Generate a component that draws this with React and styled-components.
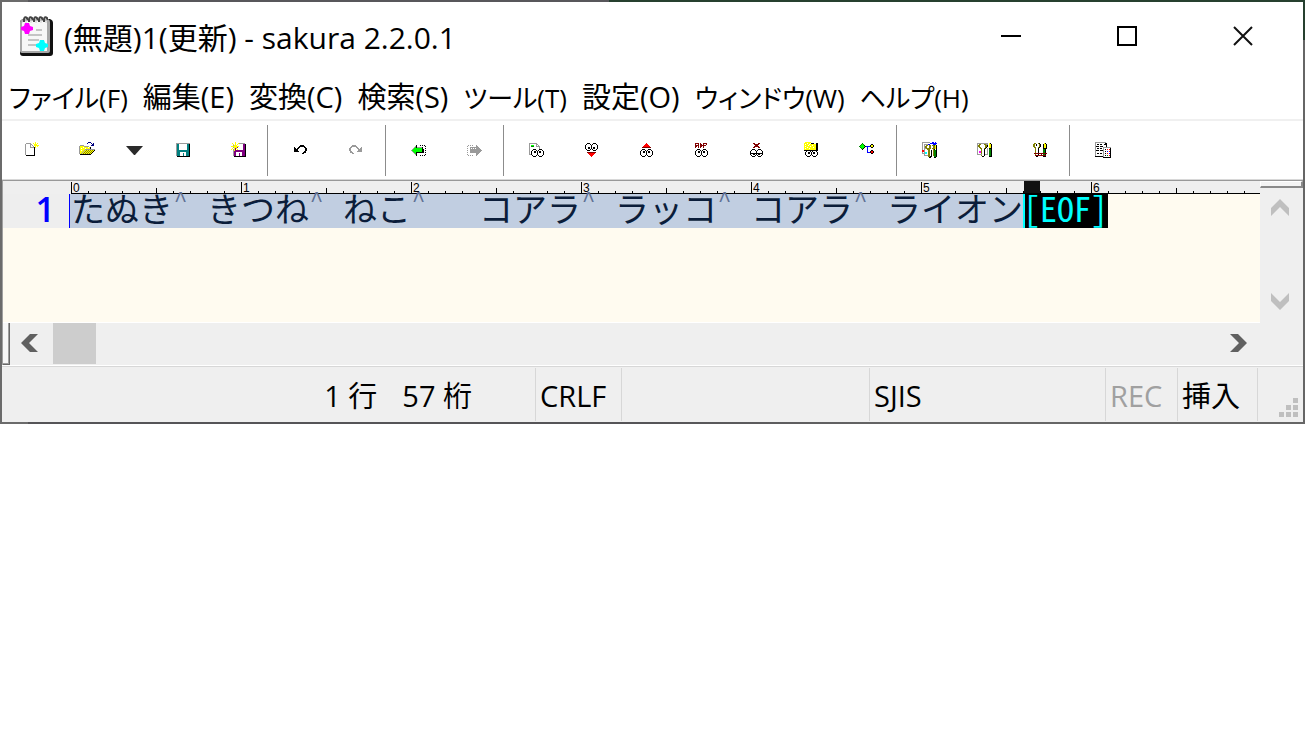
import React from 'react';
import styled, { createGlobalStyle } from 'styled-components';

const GlobalStyle = createGlobalStyle`
  *, *::before, *::after { box-sizing: border-box; }
  body {
    margin: 0;
    background: #ffffff;
    color: #000000;
    font-family: "Open Sans", "Noto Sans CJK JP", sans-serif;
  }
  button { margin: 0; padding: 0; border: 0; background: none; color: inherit; font: inherit; }
`;

const Frame = styled.main`
  padding: 2px;
  background:
    linear-gradient(#26402f, #26402f) right top / 2px 40px no-repeat,
    linear-gradient(to right, #6b6b6b 0 28px, #58575b 28px 609px, #26402f 609px) left top / 100% 2px no-repeat,
    linear-gradient(to right, #6b6b6b 0 28px, #555457 28px 50%, #666666 70%);
`;

const Window = styled.div`
  background: #ffffff;
`;

const TitleBar = styled.header`
  display: flex;
  align-items: center;
  height: 68px;
  padding: 0 2px 0 17px;
`;

const Title = styled.h1`
  flex: 1;
  margin: 0;
  padding: 4px 0 0 10px;
  font-size: 30px;
  line-height: 40px;
  font-weight: 400;
  white-space: nowrap;
`;

const WindowButton = styled.button`
  display: flex;
  align-items: center;
  justify-content: center;
  width: 116px;
  height: 68px;
`;

const MenuBar = styled.nav`
  display: flex;
  align-items: baseline;
  gap: 15px;
  height: 51px;
  padding: 7px 0 0 7px;
  border-bottom: 2px solid #f0f0f0;
`;

const MenuItem = styled.button`
  height: 40px;
  font-size: ${(p) => (p.$kana ? 26 : 29)}px;
  line-height: 40px;
  font-feature-settings: "palt";
  white-space: nowrap;
`;

const ToolBar = styled.div`
  display: flex;
  align-items: center;
  height: 59px;
  padding-left: 2px;
  border-bottom: 1px solid #d8d8d8;
`;

const ToolButton = styled.button`
  display: flex;
  align-items: center;
  justify-content: center;
  width: ${(p) => (p.$narrow ? 41 : 55)}px;
  height: 52px;
`;

const Separator = styled.span`
  width: 1px;
  height: 51px;
  margin: 0 5px 0 2px;
  background: #8c8c8c;
`;

const Editor = styled.section`
  display: grid;
  grid-template-columns: minmax(0, 1fr) 43px;
  border-top: 1px solid #999999;
  border-left: 1px solid #a0a0a0;
  background: #efefef;
`;

const TextPane = styled.div`
  height: 142px;
  overflow: hidden;
  background: #fffbf0;
  border-bottom: 1px solid #ffffff;
`;

const Ruler = styled.div`
  display: flex;
  height: 13px;
  padding-left: 68px;
  background: #efefef;
`;

const RulerScale = styled.svg`
  flex: 1;
  min-width: 0;
  height: 13px;
  font-family: "Liberation Sans", sans-serif;
  font-size: 12px;
`;

const Line = styled.div`
  display: flex;
  height: 34px;
  font-family: "Noto Sans Mono CJK JP", "Noto Sans CJK JP", monospace;
  font-size: 34px;
  line-height: 28px;
  white-space: pre;
`;

const LineNumber = styled.span`
  width: 67px;
  padding-right: 14px;
  border-right: 1px solid #0000ff;
  background: #eeeeee;
  color: #0000ff;
  font-family: "Open Sans", sans-serif;
  font-weight: 600;
  line-height: 30px;
  text-align: right;
`;

const Selection = styled.span`
  display: flex;
  padding-left: 1px;
  background: #c1cee1;
  color: #0b1d3a;
`;

const TabMark = styled.span`
  width: ${(p) => p.$columns * 17}px;
  padding-left: 1px;
  color: #5f7093;
  font-family: "Liberation Mono", monospace;
  font-size: 22px;
  line-height: 16px;
`;

const EofMark = styled.span`
  width: 85px;
  background: #000000;
  color: #00ffff;
  box-shadow: inset 2px 0 0 #00ffff;
`;

const VerticalScroll = styled.div`
  display: flex;
  flex-direction: column;
  padding-bottom: 2px;
`;

const VerticalSplit = styled.div`
  height: 7px;
  background: #f4f4f4;
  border: 1px solid #ffffff;
  border-right: 2px solid #8a8a8a;
  border-bottom: 2px solid #8a8a8a;
`;

const ScrollButton = styled.button`
  display: flex;
  align-items: center;
  justify-content: center;
  width: 40px;
  height: 40px;
`;

const VerticalTrack = styled.div`
  flex: 1;
`;

const HorizontalScroll = styled.div`
  display: flex;
  height: 43px;
  padding: 0 2px 1px 0;
`;

const HorizontalSplit = styled.div`
  width: 7px;
  background: #f8f8f8;
  border-right: 1px solid #696969;
  border-bottom: 1px solid #696969;
  box-shadow: inset -1px -1px 0 #a0a0a0;
`;

const HorizontalTrack = styled.div`
  flex: 1;
  margin-left: 3px;
`;

const Thumb = styled.div`
  width: 43px;
  height: 41px;
  background: #cdcdcd;
`;

const StatusBar = styled.footer`
  display: flex;
  height: 56px;
  padding-top: 1px;
  border-top: 1px solid #d7d7d7;
  background: #efefef;
  box-shadow: 0 -1px 0 #ffffff;
  font-size: 29px;
  line-height: 55px;
`;

const StatusCell = styled.span`
  flex: ${(p) => (p.$width ? `0 0 ${p.$width}px` : '1')};
  height: 53px;
  padding-left: 4px;
  border-right: 1px solid #d7d7d7;
  color: ${(p) => (p.$muted ? '#a0a0a0' : '#000000')};
  white-space: pre;
`;

const Position = styled(StatusCell)`
  display: flex;
  justify-content: flex-end;
  gap: 25px;
  padding-right: 63px;
`;

const Grip = styled.span`
  display: flex;
  width: 45px;
  align-items: flex-end;
  justify-content: flex-end;
  padding: 0 5px 5px 0;
`;

const inks = {
  k: '#000000', g: '#9a9a9a', w: '#ffffff', y: '#ffff00', o: '#808000', n: '#000080',
  t: '#008080', p: '#800080', l: '#00ff00', e: '#008000', r: '#ff0000', d: '#800000',
  b: '#0000ff', m: '#ff00ff', c: '#00ffff',
};

const eyes = (dir) => [
  '...kkk...kkk....',
  '..kwwwk.kwwwk...',
  dir === 'up' ? '.kwwkkwkwkkwwk..' : '.kwwwwwkwwwwwk..',
  dir === 'up' ? '.kwwkkwkwkkwwk..' : '.kwwwwwkwwwwwk..',
  dir === 'cut' ? '.kkkkkkkkkkkkk..' : dir === 'down' ? '.kwwkkwkwkkwwk..' : '.kwwwwwkwwwwwk..',
  dir === 'cut' ? '.kwwkkwkwkkwwk..' : dir === 'down' ? '.kwwkkwkwkkwwk..' : '.kwwwwwkwwwwwk..',
  '..kwwwk.kwwwk...',
  '...kkk...kkk....',
];

const disk = (ink) => [
  '................',
  '.gggggggggggggg.',
  ...Array(6).fill(`.g${ink}${ink}wwwwwwww${ink}${ink}k.`),
  `.g${ink.repeat(12)}k.`,
  `.g${ink.repeat(12)}k.`,
  `.g${ink.repeat(3)}wwwwww${ink.repeat(3)}k.`,
  `.g${ink.repeat(3)}www${ink}ww${ink.repeat(3)}k.`,
  `.g${ink.repeat(3)}www${ink}ww${ink.repeat(3)}k.`,
  `.g${ink.repeat(3)}www${ink}ww${ink.repeat(3)}k.`,
  '..kkkkkkkkkkkkk.',
];

const glyphs = {
  new: [
    '...........y....', '..ggggg..y.y.y..', '.gwwwwgg..yyy...', '.gwwwwgwg.yyyyy.',
    '.gwwwwgwwg.y.y..', '.gwwwwggggky....', '.gwwwwwwwwk.....', '.gwwwwwwwwk.....',
    '.gwwwwwwwwk.....', '.gwwwwwwwwk.....', '.gwwwwwwwwk.....', '.gwwwwwwwwk.....',
    '.gwwwwwwwwk.....', '..kkkkkkkkk.....',
  ],
  open: [
    '.........nnn....', '........n...n.n.', '.............nn.', '.gggg.......nnn.',
    'gyyyyggggg......', 'gyyywyyyywyk....', 'gywyyywyyyyk....', 'gyyyyygggggggggg',
    'gywyygyoyoyoyoyk', 'gyyygyoyoyoyoyk.', 'gyygyoyoyoyoyk..', 'gygyoyoyoyoyk...',
    '.kkkkkkkkkkk....',
  ],
  save: disk('t'),
  saveAs: [
    '.....y..........', '..y..y..ygggggg.', '...y.y.ywwwwwppk', '...gyyywwwwwwppk',
    '.yyyyyyyywwwwppk', '...gyyypwwwwwppk', '..y.ypywwwwwwppk', '.y.gypwywwwwwppk',
    '...gyppppppppppk', '...gpppppppppppk', '...gppwwwwwwpppk', '...gppwwwpwwpppk',
    '...gppwwwpwwpppk', '...gppwwwpwwpppk', '....kkkkkkkkkkkk',
  ],
  undo: [
    '', '', '', '.......kkkk.....', '......kkkkkk....', '.k...kk....kk...', '.kk.kk......kk..',
    '.kkkk.......kk..', '.kkkk.......kk..', '.kkkkk.....kk...', '..........kkk...', '.........kk.....',
  ],
  redo: [
    '', '', '', '....gggg........', '...gggggg.......', '..gg....gg...g..', '.gg......gg.gg..',
    '.gg.......gggg..', '.gg.......gggg..', '..gg.....ggggg..', '..ggg...........', '....gg..........',
  ],
  back: [
    '', '', '', '.....k...k.k.k..', '....gk........k.', '...glkgggggk....', '..gllllllllk..k.',
    '.glllllllllkk...', 'gllllllllllkk.k.', '.glllllllllkk...', '..gllkkkkkkkk.k.', '...glk..........',
    '....gk........k.', '.....k...k.k.k..',
  ],
  forward: [
    '', '', '', '..g.g.g...g.....', '.g........gg....', '....ggggggggg...', '.g..gwgwgwgggg..',
    '....ggggggggggg.', '.g..gggggggggggg', '....ggggggggggg.', '.g..gggggggggg..', '..........ggg...',
    '.g........gg....', '..g.g.g...g.....',
  ],
  find: [
    '', 'gggggggg........', 'gwwwwwwgg.......', 'gwlllwwgwg......', 'gweeewwgggg.....',
    'gwwwwwwwwwg.....', 'gwwwwwwwwwg.....', 'gww.kkk...kkk...', 'gw.kwwwk.kwwwk..',
    'gwkwwkkwkwkkwwk.', 'gwkwwkkwkwkkwwk.', 'gwkwwwwwkwwwwwk.', 'ggkwwwwwkwwwwwk.',
    '...kwwwk.kwwwk..', '....kkk...kkk...',
  ],
  findNext: ['', ...eyes('down'), '', '...ddddddddd....', '....rrrrrrr.....', '.....rrrrr......', '......rrr.......', '.......r........'],
  findPrevious: ['', '.......r........', '......rrr.......', '.....rrrrr......', '....rrrrrrr.....', '...ddddddddd....', '', ...eyes('up')],
  replace: ['', '.dddd.d..dddd...', '.d..d.dd.d..d...', '.dddd.dddddd....', '.dd.d.dd.d......', '.d..d.d..d......', '', ...eyes('up')],
  clearMark: ['', '....dd...dd.....', '.....ddddd......', '......ddd.......', '.....ddddd......', '....dd...dd.....', '', ...eyes('cut')],
  grep: [
    '.yyyyyy.........', 'yyywyywkkk..kk..', 'ywyyywyyyyyykk..', 'yyyywyyywyyykk..',
    'ywyyyywyyyyykk..', 'yyywyyyyywyykk..', 'ywyyywyyyyyykk..', 'yyyyyyyyyyyykk..',
    'kkkkkkkkkkkkkk..', '..kwwwk.kwwwk...', '.kwwkkwkwkkwwk..', '.kwwkkwkwkkwwk..',
    '.kwwwwwkwwwwwk..', '..kwwwk.kwwwk...', '...kkk...kkk....',
  ],
  outline: [
    '', '...e............', '..ele.......kk..', '.elllk.....kyyk.', 'elllllkbbbbkyyk.', '.elllk..b...kk..',
    '..elk...b.......', '...k....b.......', '........b...kk..', '........b..krrk.', '........bbbkrrk.',
    '............kk..',
  ],
  typeList: [
    'gggggggg..bb.b..', 'gwwwwwwwbbbbbbb.', 'gwggggbbww.bbb..', 'gwgwoo.oo.ooeyk.', 'gwgoo.woo.wooyk.',
    'gwgoowwoo.wooyk.', 'gwggooooo.oooyk.', 'gwgwwooowwwok.k.', 'rrgwwwoowkwoeek.', 'rrgwwwoowkwoeek.',
    'gwgccwoowkwoeek.', 'gggccwoowkwoeek.', '..gwwwoowkwoeek.', '..ggggoowkwoeek.', '......ookk..eek.', '.......kk...kk..',
  ],
  typeConfig: [
    '', 'ggggggggggg.yk..', 'gwooww.oogg.yyk.', 'goo.www.ook.yyk.', 'goo.www.ook.yyk.', 'gwoowwwwok..yyk.',
    'gwwoowwok.g.kkk.', 'gwwwowwk.wg.eek.', 'gwwwowwk.wg.eek.', 'gwmmowwk.wg.eek.', 'gwmmowwk.wg.eek.',
    'gwwwowwk.wg.eek.', 'gggggwwkggg.eek.', '....owwk....eek.', '.....kk.....kkk.',
  ],
  commonConfig: [
    '', '..oo..ok....yk..', '.oowkwwok..kyyk.', '.oowkwwok..kyyk.', '.oowwwwok..kyyk.', '..oowwok...kyyk.',
    '...owwk....kkkk.', '...owwk....eek..', '...owwk....eek..', '...owwk....eek..', '...owwk....eek..',
    '..ddddddddddddd.', '...owwk..d.eek..', '...ddddddddddd..', '....kk.....kkk..',
  ],
  windows: [
    'ggggggggggg.....', 'gwwwwwwwwwkk....', 'gwkkwkkwwkkk....', 'gwwwwwwwwwwk....', 'gkkkwkkkwwwk....',
    'gwwwwwwwgggggggg', 'gwkkwkkwgwwwwwwk', 'gwwwwwwwgwkwrwrk', 'gkkkwkkkgwwwwwwk', 'gwwwwwwwgwkwbwrk',
    'gwwwwwwwgwwwwwwk', 'gwkkwkkwgwkwrwbk', 'gwwwwwwwgwwwwwwk', 'gwwwwwwwgwkwewrk', 'kkkkkkkkgwwwwwwk', '........kkkkkkkk',
  ],
};

function PixelIcon({ name }) {
  return (
    <svg width="16" height="16" viewBox="0 0 16 16" shapeRendering="crispEdges" aria-hidden="true">
      {glyphs[name].flatMap((row, y) =>
        [...row].map((ink, x) => (inks[ink] ? <rect key={`${x}-${y}`} x={x} y={y} width="1" height="1" fill={inks[ink]} /> : null))
      )}
    </svg>
  );
}

function NotepadIcon() {
  return (
    <svg width="35" height="42" viewBox="0 0 35 42" aria-hidden="true">
      <path d="M4 4H31Q34 5 34 8V38Q34 41 31 41H4Q1 41 1 38V7Q1 5 4 4Z" fill="#111111" />
      <path d="M4 4H29Q31 5 31 7V36Q31 38 29 38H3Q1 38 1 36V7Q1 5 4 4Z" fill="#a8a8a8" />
      <path d="M4 6H28V36H3V8Z" fill="#f7f7f7" />
      {[5, 10, 15, 20, 25].map((x) => (
        <g key={x} fill="none">
          <path d={`M${x} 7V4Q${x + 1} 1 ${x + 3} 3V5`} stroke="#444444" strokeWidth="2" />
          <path d={`M${x + 2} 8V4`} stroke="#cfcfcf" />
        </g>
      ))}
      <path d="M17 15H23M9 20H23M9 25H20M9 30H17" stroke="#c4c4c4" strokeWidth="2" />
      <path d="M6 8H10L11 11L14 12V15L11 16L10 19H6L5 16L2 15V12L5 11Z" fill="#ff00ff" />
      <path d="M21 25H25L26 28L29 29V32L26 33L25 36H21L20 33L17 32V29L20 28Z" fill="#00ffff" />
    </svg>
  );
}

const turns = { up: 0, right: 90, down: 180, left: 270 };

function Chevron({ to, color }) {
  return (
    <svg width="18" height="18" viewBox="0 0 18 18" aria-hidden="true">
      <path d="M0 9L9 0L18 9V17L9 8L0 17Z" fill={color} transform={`rotate(${turns[to]} 9 9)`} />
    </svg>
  );
}

const menus = [
  ['ファイル(F)', true], ['編集(E)'], ['変換(C)'], ['検索(S)'],
  ['ツール(T)', true], ['設定(O)'], ['ウィンドウ(W)', true], ['ヘルプ(H)', true],
];

const tools = [
  [['new', '新規作成'], ['open', '開く'], ['recent', '最近使ったファイル'], ['save', '上書き保存'], ['saveAs', '名前を付けて保存']],
  [['undo', '元に戻す'], ['redo', 'やり直し']],
  [['back', '前へ戻る'], ['forward', '次へ進む']],
  [['find', '検索'], ['findNext', '次を検索'], ['findPrevious', '前を検索'], ['replace', '置換'], ['clearMark', '検索マークの切替え'], ['grep', 'Grep'], ['outline', 'アウトライン解析']],
  [['typeList', 'タイプ別設定一覧'], ['typeConfig', 'タイプ別設定'], ['commonConfig', '共通設定']],
  [['windows', 'ウィンドウ一覧']],
];

const words = [['たぬき', 2], ['きつね', 2], ['ねこ', 4], ['コアラ', 2], ['ラッコ', 2], ['コアラ', 2], ['ライオン', 0]];

const columnWidth = 17;
const caretColumn = 56;
const rulerColumns = 70;

function RulerMarks() {
  return (
    <RulerScale aria-hidden="true">
      {Array.from({ length: rulerColumns }, (_, column) => {
        const height = column % 10 === 0 ? 12 : column % 5 === 0 ? 6 : 3;
        return <rect key={column} x={column * columnWidth} y={13 - height} width="1" height={height} fill="#000000" />;
      })}
      {Array.from({ length: rulerColumns / 10 }, (_, ten) => (
        <text key={ten} x={ten * 10 * columnWidth + 2} y="11">{ten}</text>
      ))}
      <rect x={caretColumn * columnWidth + 1} width="16" height="12" fill="#111111" />
      <rect y="12" width="100%" height="1" fill="#000000" />
    </RulerScale>
  );
}

export default function App() {
  return (
    <>
      <GlobalStyle />
      <Frame>
        <Window>
          <TitleBar>
            <NotepadIcon />
            <Title>(無題)1(更新) - sakura 2.2.0.1</Title>
            <WindowButton aria-label="最小化">
              <svg width="20" height="20"><path d="M0 10H20" stroke="#000000" strokeWidth="2" /></svg>
            </WindowButton>
            <WindowButton aria-label="最大化">
              <svg width="20" height="20"><rect x="1" y="1" width="18" height="18" fill="none" stroke="#000000" strokeWidth="2" /></svg>
            </WindowButton>
            <WindowButton aria-label="閉じる">
              <svg width="20" height="20"><path d="M1 1L19 19M19 1L1 19" stroke="#111111" strokeWidth="2" /></svg>
            </WindowButton>
          </TitleBar>
          <MenuBar>
            {menus.map(([label, kana]) => <MenuItem key={label} $kana={kana}>{label}</MenuItem>)}
          </MenuBar>
          <ToolBar role="toolbar">
            {tools.map((group, index) => (
              <React.Fragment key={index}>
                {index > 0 && <Separator />}
                {group.map(([name, label]) => (
                  <ToolButton key={name} aria-label={label} $narrow={name === 'recent'}>
                    {name === 'recent' ? (
                      <svg width="17" height="9"><path d="M0 0H17L9 9H8Z" fill="#2a2a2a" /></svg>
                    ) : (
                      <PixelIcon name={name} />
                    )}
                  </ToolButton>
                ))}
              </React.Fragment>
            ))}
          </ToolBar>
          <Editor>
            <TextPane>
              <Ruler><RulerMarks /></Ruler>
              <Line>
                <LineNumber>1</LineNumber>
                <Selection>
                  {words.map(([word, tab], index) => (
                    <React.Fragment key={index}>
                      <span>{word}</span>
                      {tab > 0 && <TabMark $columns={tab}>^</TabMark>}
                    </React.Fragment>
                  ))}
                </Selection>
                <EofMark>[EOF]</EofMark>
              </Line>
            </TextPane>
            <VerticalScroll>
              <VerticalSplit />
              <ScrollButton aria-label="上へスクロール"><Chevron to="up" color="#bfbfbf" /></ScrollButton>
              <VerticalTrack />
              <ScrollButton aria-label="下へスクロール"><Chevron to="down" color="#bfbfbf" /></ScrollButton>
            </VerticalScroll>
            <HorizontalScroll>
              <HorizontalSplit />
              <ScrollButton aria-label="左へスクロール"><Chevron to="left" color="#606060" /></ScrollButton>
              <HorizontalTrack><Thumb /></HorizontalTrack>
              <ScrollButton aria-label="右へスクロール"><Chevron to="right" color="#606060" /></ScrollButton>
            </HorizontalScroll>
          </Editor>
          <StatusBar>
            <Position><span>1 行</span><span>57 桁</span></Position>
            <StatusCell $width={86}>CRLF</StatusCell>
            <StatusCell $width={248} />
            <StatusCell $width={236}>SJIS</StatusCell>
            <StatusCell $width={72} $muted>REC</StatusCell>
            <StatusCell $width={80}>挿入</StatusCell>
            <Grip>
              <svg width="19" height="19" fill="#bfbfbf" aria-hidden="true">
                <path d="M14 0h5v5h-5zM7 7h5v5h-5zM14 7h5v5h-5zM0 14h5v5h-5zM7 14h5v5h-5zM14 14h5v5h-5z" />
              </svg>
            </Grip>
          </StatusBar>
        </Window>
      </Frame>
    </>
  );
}
